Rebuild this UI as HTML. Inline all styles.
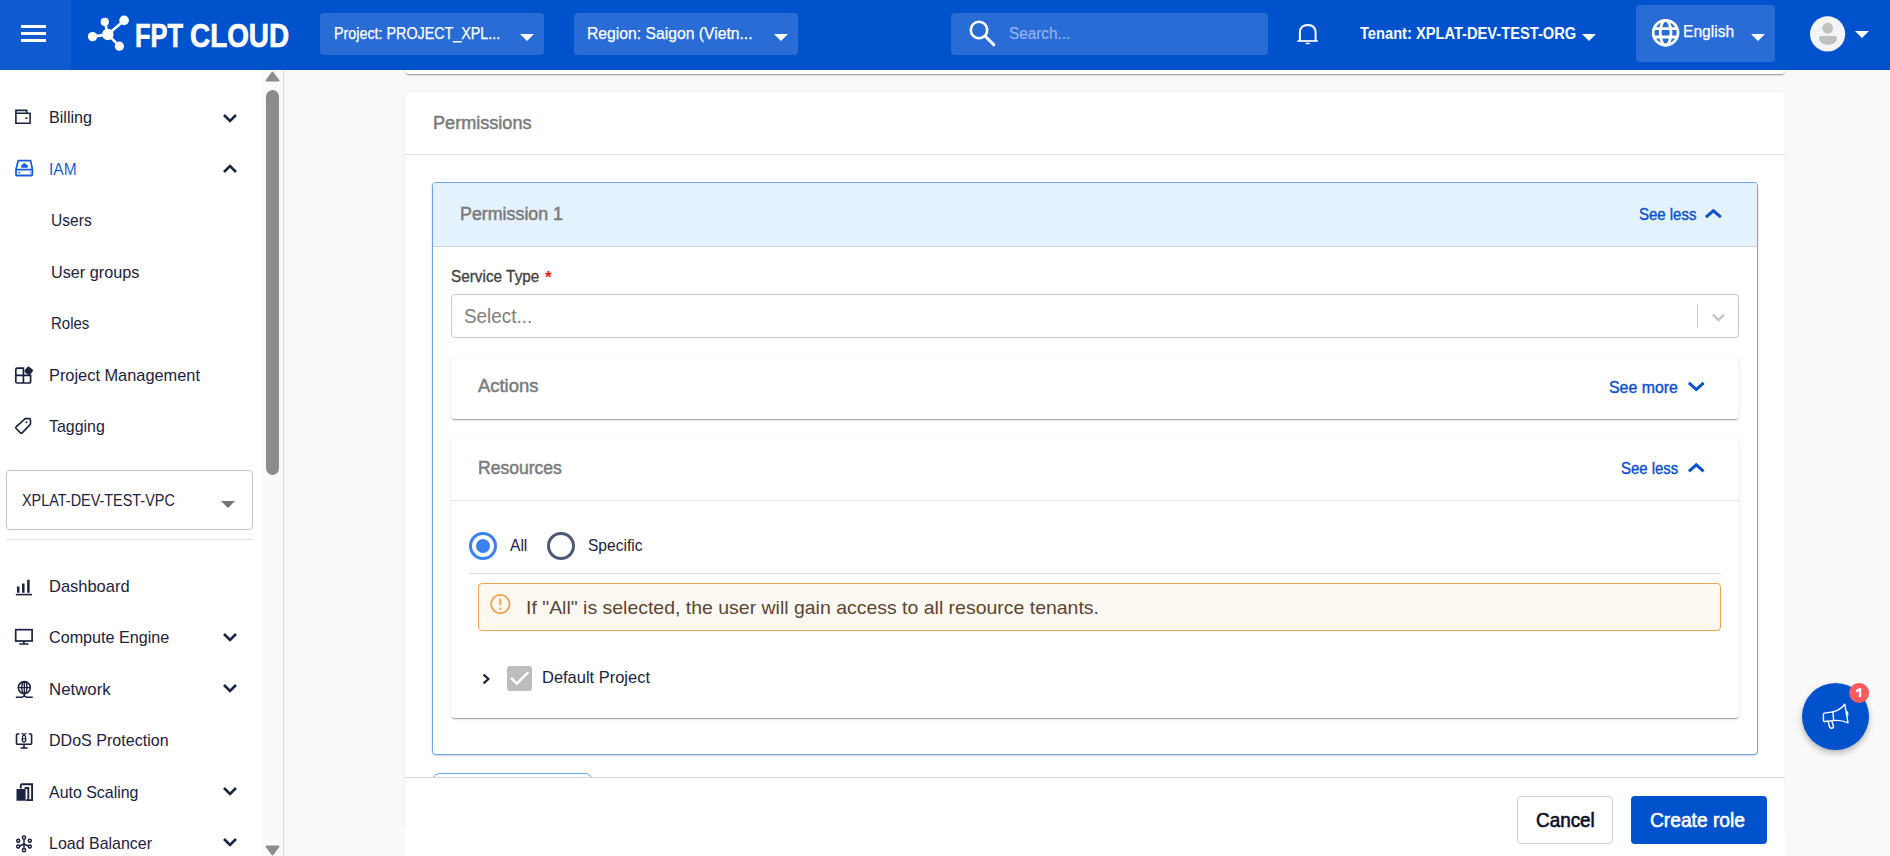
<!DOCTYPE html>
<html><head><meta charset="utf-8">
<style>
*{box-sizing:border-box;margin:0;padding:0}
html,body{width:1890px;height:856px;overflow:hidden;background:#f9f9f9;font-family:"Liberation Sans",sans-serif}
.abs{position:absolute}
.t{position:absolute;white-space:nowrap;transform-origin:left top}
.dd{position:absolute;background:#2a6cd6;border-radius:4px}
.tri{position:absolute;width:0;height:0;border-left:7px solid transparent;border-right:7px solid transparent;border-top:7px solid #fff}
.card{position:absolute;background:#fff;border-radius:4px;box-shadow:0 2px 1px -1px rgba(0,0,0,.2),0 1px 1px 0 rgba(0,0,0,.14),0 1px 3px 0 rgba(0,0,0,.12)}
</style></head><body>

<div class="card" style="left:405px;top:-10px;width:1380px;height:84px"></div>
<div class="abs" style="left:405px;top:92px;width:1380px;height:737px;background:#fff;border-radius:4px;box-shadow:0 0 2px rgba(0,0,0,.14)"></div>
<div class="abs" style="left:405px;top:154px;width:1380px;height:1px;background:#e2e2e2"></div>
<div class="t" style="left:432.60px;top:112px;font-size:18px;line-height:22px;color:#7b7b7b;transform:scaleX(1.0051);-webkit-text-stroke:0.5px #7b7b7b;">Permissions</div>
<div class="abs" style="left:432px;top:182px;width:1326px;height:573px;border:1px solid #6fa3e6;border-radius:4px;background:#fff;box-shadow:0 1px 2px rgba(0,0,0,.18)"></div>
<div class="abs" style="left:433px;top:183px;width:1324px;height:64px;background:#e4f2fe;border-bottom:1px solid #cdd6de;border-radius:3px 3px 0 0"></div>
<div class="t" style="left:460.30px;top:203px;font-size:18px;line-height:22px;color:#7b7b7b;transform:scaleX(0.9904);-webkit-text-stroke:0.5px #7b7b7b;">Permission 1</div>
<div class="t" style="left:1638.80px;top:204px;font-size:17px;line-height:21px;color:#0b50cc;transform:scaleX(0.8797);-webkit-text-stroke:0.4px #0b50cc;">See less</div>
<svg class="abs" style="left:1705.2px;top:208.9px;overflow:visible" width="16.799999999999955" height="9.900000000000006" viewBox="0 0 16.799999999999955 9.900000000000006"><path d="M0.9 8.100000000000005 L8.399999999999977 1.8 L15.899999999999954 8.100000000000005" fill="none" stroke="#0b50cc" stroke-width="3"/></svg>
<div class="t" style="left:451.00px;top:267px;font-size:16px;line-height:20px;color:#404040;transform:scaleX(0.9583);-webkit-text-stroke:0.3px #404040;">Service Type</div>
<div class="t" style="left:544.60px;top:267px;font-size:17px;line-height:21px;font-weight:bold;color:#f01a1a;transform:scaleX(1.0264);">*</div>
<div class="abs" style="left:451px;top:294px;width:1288px;height:44px;border:1px solid #c8c8c8;border-radius:4px;background:#fff"></div>
<div class="t" style="left:463.50px;top:304px;font-size:20px;line-height:25px;color:#808080;transform:scaleX(0.9453);">Select...</div>
<div class="abs" style="left:1697px;top:304px;width:1px;height:24px;background:#cccccc"></div>
<svg class="abs" style="left:1711.5px;top:312.5px;overflow:visible" width="13.0" height="8.5" viewBox="0 0 13.0 8.5"><path d="M0.9 1.4000000000000001 L6.5 7.1 L12.1 1.4000000000000001" fill="none" stroke="#c2c2c2" stroke-width="2.2"/></svg>
<div class="card" style="left:451px;top:356px;width:1288px;height:63px"></div>
<div class="t" style="left:478.00px;top:375px;font-size:18px;line-height:22px;color:#7b7b7b;transform:scaleX(1.0220);-webkit-text-stroke:0.5px #7b7b7b;">Actions</div>
<div class="t" style="left:1609.00px;top:377px;font-size:17px;line-height:21px;color:#0b50cc;transform:scaleX(0.9356);-webkit-text-stroke:0.4px #0b50cc;">See more</div>
<svg class="abs" style="left:1687.5px;top:381.3px;overflow:visible" width="16.5" height="10.300000000000011" viewBox="0 0 16.5 10.300000000000011"><path d="M0.9 1.8 L8.25 8.50000000000001 L15.6 1.8" fill="none" stroke="#0b50cc" stroke-width="3"/></svg>
<div class="card" style="left:451px;top:437px;width:1288px;height:281px"></div>
<div class="abs" style="left:451px;top:500px;width:1288px;height:1px;background:#e2e2e2"></div>
<div class="t" style="left:478.00px;top:457px;font-size:18px;line-height:22px;color:#7b7b7b;transform:scaleX(0.9744);-webkit-text-stroke:0.5px #7b7b7b;">Resources</div>
<div class="t" style="left:1620.80px;top:458px;font-size:17px;line-height:21px;color:#0b50cc;transform:scaleX(0.8766);-webkit-text-stroke:0.4px #0b50cc;">See less</div>
<svg class="abs" style="left:1687.5px;top:462.5px;overflow:visible" width="16.5" height="10.100000000000023" viewBox="0 0 16.5 10.100000000000023"><path d="M0.9 8.300000000000022 L8.25 1.8 L15.6 8.300000000000022" fill="none" stroke="#0b50cc" stroke-width="3"/></svg>
<div class="abs" style="left:468.5px;top:531.5px;width:28px;height:28px;border-radius:50%;border:3px solid #3b82f0"></div>
<div class="abs" style="left:475.5px;top:538.5px;width:14px;height:14px;border-radius:50%;background:#3b82f0"></div>
<div class="t" style="left:510.00px;top:535px;font-size:17px;line-height:21px;color:#1c2340;transform:scaleX(0.9166);">All</div>
<div class="abs" style="left:547px;top:531.5px;width:28px;height:28px;border-radius:50%;border:3px solid #4f5878"></div>
<div class="t" style="left:587.80px;top:535px;font-size:17px;line-height:21px;color:#1c2340;transform:scaleX(0.9143);">Specific</div>
<div class="abs" style="left:469px;top:573px;width:1252px;height:1px;background:#dedede"></div>
<div class="abs" style="left:478px;top:583px;width:1243px;height:48px;border:1px solid #efa452;border-radius:4px;background:#fdf8f1"></div>
<svg class="abs" style="left:489px;top:593px" width="23" height="23" viewBox="0 0 23 23"><circle cx="11.3" cy="11.1" r="9.2" fill="none" stroke="#f0a04e" stroke-width="1.8"/><path d="M11.3 5.6 V12.4" stroke="#f0a04e" stroke-width="2"/><circle cx="11.3" cy="15.6" r="1.2" fill="#f0a04e"/></svg>
<div class="t" style="left:526.30px;top:596px;font-size:19px;line-height:24px;color:#5a4632;transform:scaleX(1.0241);">If "All" is selected, the user will gain access to all resource tenants.</div>
<svg class="abs" style="left:481px;top:672px" width="11" height="14" viewBox="0 0 11 14"><path d="M2.6 2.6 L7.4 7 L2.6 11.4" fill="none" stroke="#1c2340" stroke-width="2.2"/></svg>
<div class="abs" style="left:507px;top:666px;width:25px;height:25px;background:#bdbdbd;border-radius:3px"></div>
<svg class="abs" style="left:507px;top:667px" width="25" height="24" viewBox="0 0 25 24"><path d="M4 10.8 L9.8 16.6 L21.3 5.1" fill="none" stroke="#fff" stroke-width="2.5"/></svg>
<div class="t" style="left:542.00px;top:667px;font-size:17px;line-height:21px;color:#1c2340;transform:scaleX(0.9686);">Default Project</div>
<div class="abs" style="left:432px;top:773px;width:161px;height:17px;border:1px solid #6fa3e6;border-radius:8px;background:#fff"></div>
<div class="abs" style="left:405px;top:777px;width:1380px;height:79px;background:#fff;border-top:1px solid #d6d6d6"></div>
<div class="abs" style="left:1517px;top:796px;width:96px;height:48px;border:1px solid #cfcfcf;border-radius:4px;background:#fff"></div>
<div class="t" style="left:1535.50px;top:808px;font-size:20px;line-height:25px;color:#0d0d26;transform:scaleX(0.9446);-webkit-text-stroke:0.6px #0d0d26;">Cancel</div>
<div class="abs" style="left:1631px;top:796px;width:136px;height:48px;background:#0052cc;border-radius:4px"></div>
<div class="t" style="left:1649.60px;top:808px;font-size:20px;line-height:25px;color:#ffffff;transform:scaleX(0.9598);-webkit-text-stroke:0.6px #fff;">Create role</div>
<div class="abs" style="left:1802px;top:683px;width:67px;height:67px;border-radius:50%;background:#0052cc;box-shadow:0 3px 6px rgba(0,0,0,.28)"></div>
<svg class="abs" style="left:1815px;top:698px" width="40" height="36" viewBox="1815 698 40 36"><g fill="none" stroke="#fff" stroke-width="1.4" stroke-linejoin="round" stroke-linecap="round"><path d="M1823.4 714.6 Q1823.2 713.3 1824.4 713.1 L1833 711.9 L1833.6 720.6 L1824.6 721.5 Q1823.6 721.6 1823.5 720.6 Z"/><path d="M1833 711.9 Q1839.6 710.6 1844.8 704.3 L1848 722.8 Q1841 719.6 1833.6 720.6"/><path d="M1828.2 721.3 L1829.5 726.8 Q1830.1 728.5 1832 728.2 Q1833.8 727.8 1833.5 726.5 L1831.8 720.9"/><path d="M1847 711.6 Q1848.6 713.4 1847.7 715.2"/></g></svg>
<svg class="abs" style="left:1845px;top:679px" width="28" height="28" viewBox="1845 679 28 28"><circle cx="1859.1" cy="692.9" r="10" fill="#fa5a5c"/><path d="M1855.9 690.3 L1859.1 688.1 H1861.2 V697 H1858.8 V691.1 L1855.9 692.5 Z" fill="#fff"/></svg>
<div class="abs" style="left:0;top:70px;width:284px;height:786px;background:#fff;border-right:1px solid #dcdcdc"></div>
<div class="abs" style="left:262px;top:70px;width:21px;height:786px;background:#fafafa"></div>
<div class="abs" style="left:266px;top:90px;width:13px;height:385px;border-radius:7px;background:#8c8c8c"></div>
<svg class="abs" style="left:265px;top:71px" width="15" height="11" viewBox="0 0 15 11"><path d="M7.5 1.5 L13.5 9.5 L1.5 9.5 Z" fill="#8c8c8c" stroke="#8c8c8c" stroke-width="2" stroke-linejoin="round"/></svg>
<svg class="abs" style="left:265px;top:845px" width="15" height="11" viewBox="0 0 15 11"><path d="M1.5 1.5 L13.5 1.5 L7.5 9.5 Z" fill="#8c8c8c" stroke="#8c8c8c" stroke-width="2" stroke-linejoin="round"/></svg>
<div class="t" style="left:49.00px;top:107px;font-size:17px;line-height:21px;color:#1c2340;transform:scaleX(0.9499);">Billing</div>
<svg class="abs" style="left:14px;top:108.5px" width="18" height="16" viewBox="0 0 18 16"><path d="M1.9 4.2 V14.2 H16.1 V4.2 H12.7 V1.4 H1.9 Z M1.9 4.2 H12.7" fill="none" stroke="#1c2340" stroke-width="1.6"/><rect x="11.3" y="8.4" width="2.2" height="1.6" fill="#1c2340"/></svg>
<svg class="abs" style="left:222px;top:113px" width="16" height="11" viewBox="0 0 16 11"><path d="M2 2 L8 8 L14 2" fill="none" stroke="#1c2340" stroke-width="2.6"/></svg>
<div class="t" style="left:49.00px;top:159px;font-size:17px;line-height:21px;color:#1a5fd6;transform:scaleX(0.9124);">IAM</div>
<svg class="abs" style="left:15px;top:159px" width="19" height="18" viewBox="0 0 19 18"><path d="M3.2 1.6 H15.6 L17.4 10.4 V15.6 C17.4 16.2 17.1 16.5 16.5 16.5 H1.9 C1.3 16.5 1 16.2 1 15.6 V10.4 Z M1 10.6 H17.4" fill="none" stroke="#1a5fd6" stroke-width="1.8" stroke-linejoin="round"/><path d="M7 8.7 C5.4 8.7 5.4 6.3 7.1 6.3 C7.4 4.2 10.5 3.5 11.2 5.6 C13 5.4 13.8 8.7 11.9 8.7 Z" fill="#1a5fd6"/><rect x="3.4" y="12.8" width="1.8" height="1.5" fill="#1a5fd6"/><rect x="15.2" y="12.8" width="0.8" height="1.5" fill="#1a5fd6"/></svg>
<svg class="abs" style="left:222px;top:163px" width="16" height="11" viewBox="0 0 16 11"><path d="M2 9 L8 3 L14 9" fill="none" stroke="#1c2340" stroke-width="2.6"/></svg>
<div class="t" style="left:51.20px;top:210px;font-size:17px;line-height:21px;color:#1c2340;transform:scaleX(0.9172);">Users</div>
<div class="t" style="left:51.20px;top:262px;font-size:17px;line-height:21px;color:#1c2340;transform:scaleX(0.9544);">User groups</div>
<div class="t" style="left:51.20px;top:313px;font-size:17px;line-height:21px;color:#1c2340;transform:scaleX(0.8828);">Roles</div>
<div class="t" style="left:49.30px;top:365px;font-size:17px;line-height:21px;color:#1c2340;transform:scaleX(0.9625);">Project Management</div>
<svg class="abs" style="left:14px;top:365px" width="20" height="20" viewBox="0 0 20 20"><path d="M3.4 3.2 H9.4 V10.4 H16.6 V16.2 C16.6 17.4 16 18 14.8 18 H3.4 C2.2 18 1.8 17.4 1.8 16.2 V4.8 C1.8 3.6 2.2 3.2 3.4 3.2 Z M1.8 10.4 H16.6 M9.4 10.4 V18" fill="none" stroke="#1c2340" stroke-width="1.7"/><rect x="11.2" y="2.4" width="7" height="7" rx="1.6" transform="rotate(38 14.7 5.9)" fill="#1c2340"/></svg>
<div class="t" style="left:49.30px;top:416px;font-size:17px;line-height:21px;color:#1c2340;transform:scaleX(0.9378);">Tagging</div>
<svg class="abs" style="left:14px;top:417px" width="18" height="18" viewBox="0 0 18 18"><path d="M11.2 1.6 H15.2 C16 1.6 16.5 2.1 16.5 2.9 V7.1 L8.2 15.9 C7.7 16.4 7 16.4 6.5 15.9 L2.1 11.5 C1.6 11 1.6 10.3 2.1 9.8 Z" fill="none" stroke="#1c2340" stroke-width="1.6" stroke-linejoin="round"/><circle cx="12.5" cy="5.3" r="1" fill="#1c2340"/></svg>
<div class="abs" style="left:6px;top:470px;width:247px;height:60px;border:1px solid #c4c4c4;border-radius:4px;background:#fff"></div>
<div class="t" style="left:22.00px;top:491px;font-size:16px;line-height:20px;color:#1c2340;transform:scaleX(0.9015);">XPLAT-DEV-TEST-VPC</div>
<div class="abs" style="left:221px;top:501px;width:0;height:0;border-left:7px solid transparent;border-right:7px solid transparent;border-top:7px solid #757575"></div>
<div class="abs" style="left:6px;top:539px;width:247px;height:1px;background:#e0e0e6"></div>
<div class="t" style="left:49.00px;top:576px;font-size:17px;line-height:21px;color:#1c2340;transform:scaleX(0.9684);">Dashboard</div>
<svg class="abs" style="left:15px;top:579px" width="18" height="17" viewBox="0 0 18 17"><path d="M3.2 7.4 V13.8 M8.3 4.6 V13.8 M13.4 0.8 V13.8" stroke="#1c2340" stroke-width="2.5"/><path d="M0.8 15.6 H17" stroke="#1c2340" stroke-width="1.6"/></svg>
<div class="t" style="left:49.00px;top:627px;font-size:17px;line-height:21px;color:#1c2340;transform:scaleX(0.9500);">Compute Engine</div>
<svg class="abs" style="left:14px;top:628px" width="20" height="18" viewBox="0 0 20 18"><rect x="1.7" y="1.7" width="16.4" height="11.3" fill="none" stroke="#1c2340" stroke-width="1.7"/><path d="M9.9 13 V15.8 M5.3 16 H14.5" stroke="#1c2340" stroke-width="1.7"/></svg>
<svg class="abs" style="left:222px;top:632px" width="16" height="11" viewBox="0 0 16 11"><path d="M2 2 L8 8 L14 2" fill="none" stroke="#1c2340" stroke-width="2.6"/></svg>
<div class="t" style="left:49.00px;top:679px;font-size:17px;line-height:21px;color:#1c2340;transform:scaleX(0.9888);">Network</div>
<svg class="abs" style="left:15px;top:680px" width="19" height="19" viewBox="0 0 19 19"><circle cx="9.3" cy="7.6" r="6" fill="none" stroke="#1c2340" stroke-width="1.6"/><ellipse cx="9.3" cy="7.6" rx="2.6" ry="6" fill="none" stroke="#1c2340" stroke-width="1.4"/><path d="M3.3 7.6 H15.3 M9.3 1.6 V17 M0.8 17.2 H7.3 L9.3 15.4 L11.3 17.2 H17.8" fill="none" stroke="#1c2340" stroke-width="1.4"/></svg>
<svg class="abs" style="left:222px;top:683px" width="16" height="11" viewBox="0 0 16 11"><path d="M2 2 L8 8 L14 2" fill="none" stroke="#1c2340" stroke-width="2.6"/></svg>
<div class="t" style="left:49.00px;top:730px;font-size:17px;line-height:21px;color:#1c2340;transform:scaleX(0.9445);">DDoS Protection</div>
<svg class="abs" style="left:15px;top:732px" width="19" height="18" viewBox="0 0 19 18"><path d="M4.3 2 H2.2 C1.8 2 1.5 2.3 1.5 2.7 V11.5 C1.5 12 1.8 12.3 2.3 12.3 H15.8 C16.3 12.3 16.6 12 16.6 11.5 V2.7 C16.6 2.3 16.3 2 15.9 2 H13.8 M9 12.3 V15.5 M5.5 16 H12.6" fill="none" stroke="#1c2340" stroke-width="1.6"/><path d="M9 2.4 C7.4 3.6 7.2 4.8 7.2 6.8 C7.2 9 8.2 10 9 10 C9.8 10 10.8 9 10.8 6.8 C10.8 4.8 10.6 3.6 9 2.4 Z M6.6 1.2 L9 2.6 L11.4 1.2" fill="none" stroke="#1c2340" stroke-width="1.3"/><path d="M7.6 6.8 H10.4" stroke="#1c2340" stroke-width="1.2"/></svg>
<div class="t" style="left:49.00px;top:782px;font-size:17px;line-height:21px;color:#1c2340;transform:scaleX(0.9372);">Auto Scaling</div>
<svg class="abs" style="left:14px;top:782px" width="20" height="20" viewBox="0 0 20 20"><path d="M6.8 2.3 H18.1 V18.1 H13.5 M6.8 2.3 V6.5 M10.6 6 H14.3 V18.1 H12" fill="none" stroke="#1c2340" stroke-width="1.9"/><path d="M2.5 8.3 C2.5 7.6 3 7.1 3.7 7.1 H11.6 V18.7 H2.5 Z" fill="#1c2340"/></svg>
<svg class="abs" style="left:222px;top:786px" width="16" height="11" viewBox="0 0 16 11"><path d="M2 2 L8 8 L14 2" fill="none" stroke="#1c2340" stroke-width="2.6"/></svg>
<div class="t" style="left:49.00px;top:833px;font-size:17px;line-height:21px;color:#1c2340;transform:scaleX(0.9396);">Load Balancer</div>
<svg class="abs" style="left:15px;top:835px" width="18" height="18" viewBox="0 0 18 18"><g fill="none" stroke="#1c2340" stroke-width="1.5"><circle cx="9" cy="2.6" r="1.6"/><circle cx="3.2" cy="5.8" r="1.5"/><circle cx="14.8" cy="5.8" r="1.5"/><circle cx="3.2" cy="11.6" r="1.5"/><circle cx="14.8" cy="11.6" r="1.5"/><circle cx="9" cy="15.2" r="1.6"/><path d="M9 4.2 V9 L4.6 11 M9 9 L13.4 11 M9 9 V13.6"/></g></svg>
<svg class="abs" style="left:222px;top:837px" width="16" height="11" viewBox="0 0 16 11"><path d="M2 2 L8 8 L14 2" fill="none" stroke="#1c2340" stroke-width="2.6"/></svg>
<div class="abs" style="left:0;top:0;width:1890px;height:70px;background:#0052cc"></div>
<div class="abs" style="left:0px;top:0px;width:71px;height:70px;background:#105bd0"></div>
<div class="abs" style="left:21.1px;top:25.1px;width:25.2px;height:3px;background:#fff"></div>
<div class="abs" style="left:21.1px;top:32.1px;width:25.2px;height:3px;background:#fff"></div>
<div class="abs" style="left:21.1px;top:39.1px;width:25.2px;height:3px;background:#fff"></div>
<svg class="abs" style="left:84px;top:12px" width="46" height="42" viewBox="84 12 46 42"><g stroke="#fff" stroke-width="2.6"><path d="M107.8 34.4 L104.8 21.9 M107.8 34.4 L124.1 20.4 M107.8 34.4 L92.6 36.6 M107.8 34.4 L119.4 46.2"/></g><g fill="#fff"><circle cx="107.8" cy="34.4" r="5.7"/><circle cx="104.8" cy="21.9" r="4.1"/><circle cx="124.1" cy="20.4" r="4.8"/><circle cx="92.6" cy="36.6" r="4.7"/><circle cx="119.4" cy="46.2" r="4.6"/></g></svg>
<div class="t" style="left:135.00px;top:15px;font-size:33px;line-height:41px;font-weight:bold;color:#ffffff;transform:scaleX(0.7695);-webkit-text-stroke:0.7px #fff;">FPT</div>
<div class="t" style="left:189.60px;top:15px;font-size:33px;line-height:41px;font-weight:bold;color:#ffffff;transform:scaleX(0.8452);-webkit-text-stroke:0.7px #fff;">CLOUD</div>
<div class="dd" style="left:320px;top:13px;width:224px;height:42px"></div>
<div class="t" style="left:333.70px;top:23px;font-size:17px;line-height:21px;color:#ffffff;transform:scaleX(0.8420);-webkit-text-stroke:0.25px #fff;">Project: PROJECT_XPL...</div>
<div class="tri" style="left:519.5px;top:34px"></div>
<div class="dd" style="left:574px;top:13px;width:224px;height:42px"></div>
<div class="t" style="left:587.00px;top:23px;font-size:17px;line-height:21px;color:#ffffff;transform:scaleX(0.9238);-webkit-text-stroke:0.25px #fff;">Region: Saigon (Vietn...</div>
<div class="tri" style="left:774px;top:34px"></div>
<div class="dd" style="left:951px;top:13px;width:317px;height:42px"></div>
<svg class="abs" style="left:968px;top:19px" width="28" height="28" viewBox="0 0 28 28"><circle cx="11" cy="11" r="8.2" fill="none" stroke="#fff" stroke-width="2.6"/><path d="M17 17 L25.8 25.8" stroke="#fff" stroke-width="3" stroke-linecap="round"/></svg>
<div class="t" style="left:1008.80px;top:23px;font-size:17px;line-height:21px;color:#94b4ec;transform:scaleX(0.9000);-webkit-text-stroke:0.2px #94b4ec;">Search...</div>
<svg class="abs" style="left:1294px;top:20px" width="28" height="28" viewBox="1294 20 28 28"><path d="M1297.4 41 H1317.8" stroke="#fff" stroke-width="1.7"/><path d="M1299.9 41 V32.6 C1299.9 27.4 1303.2 24.9 1307.7 24.9 C1312.2 24.9 1315.6 27.4 1315.6 32.6 V41" fill="none" stroke="#fff" stroke-width="2"/><path d="M1305.3 42.8 H1310.1 C1309.7 44.8 1305.7 44.8 1305.3 42.8 Z" fill="#fff"/></svg>
<div class="t" style="left:1360.30px;top:24px;font-size:16px;line-height:20px;font-weight:bold;color:#ffffff;transform:scaleX(0.9166);">Tenant: XPLAT-DEV-TEST-ORG</div>
<div class="tri" style="left:1581.5px;top:34px"></div>
<div class="dd" style="left:1636px;top:5px;width:139px;height:57px"></div>
<svg class="abs" style="left:1651px;top:18px" width="30" height="30" viewBox="0 0 30 30"><g fill="none" stroke="#fff" stroke-width="2.8"><circle cx="14.6" cy="14.8" r="12.4"/><ellipse cx="14.6" cy="14.8" rx="5.4" ry="12.4"/><path d="M2.4 10.6 H26.8 M2.4 19 H26.8"/></g></svg>
<div class="t" style="left:1683.40px;top:21px;font-size:17px;line-height:21px;color:#ffffff;transform:scaleX(0.9166);-webkit-text-stroke:0.25px #fff;">English</div>
<div class="tri" style="left:1750.5px;top:34px"></div>
<svg class="abs" style="left:1805px;top:10px" width="48" height="48" viewBox="1805 10 48 48"><circle cx="1827.6" cy="33.9" r="17.6" fill="#f3f4f6"/><circle cx="1827.7" cy="28.2" r="5.4" fill="#c0c0c0"/><path d="M1820.8 36.1 H1834.8 C1836 36.1 1837 37 1837 38.2 C1837 42 1833.2 44.8 1828 44.8 C1822.8 44.8 1819 42 1819 38.2 C1819 37 1819.8 36.1 1820.8 36.1 Z" fill="#c0c0c0"/></svg>
<div class="tri" style="left:1855px;top:31px"></div>
</body></html>
